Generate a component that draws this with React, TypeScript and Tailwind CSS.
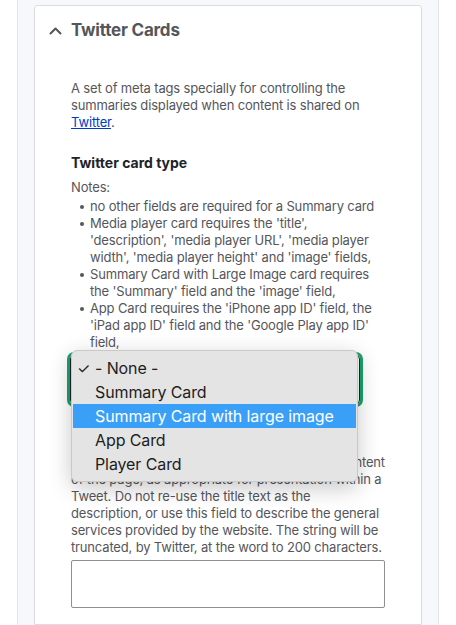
const notes = [
  "no other fields are required for a Summary card",
  "Media player card requires the 'title', 'description', 'media player URL', 'media player width', 'media player height' and 'image' fields,",
  "Summary Card with Large Image card requires the 'Summary' field and the 'image' field,",
  "App Card requires the 'iPhone app ID' field, the 'iPad app ID' field and the 'Google Play app ID' field,",
];

const options = ["- None -", "Summary Card", "Summary Card with large image", "App Card", "Player Card"];

// wrapped as the reference wraps it
const descriptionLines = [
  "A description that concisely summarizes the content",
  "of the page, as appropriate for presentation within a",
  "Tweet. Do not re-use the title text as the",
  "description, or use this field to describe the general",
  "services provided by the website. The string will be",
  "truncated, by Twitter, at the word to 200 characters.",
];

function SelectPopup() {
  return (
    <div className="absolute left-px top-[-5px] w-[287px] rounded-[6px] border border-[#c9c9c9] bg-[#e4e4e4] py-[5px] shadow-[0_6px_22px_rgba(0,0,0,0.22)]">
      {options.map((opt, i) => (
        <div
          key={opt}
          className={
            "relative mx-px flex h-[24px] items-center pl-[22px] text-[16px] tracking-[-0.1px] " +
            (i === 2 ? "bg-[#3a9ff7] text-white" : "text-[#1d1d1d]")
          }
        >
          {i === 0 && <span className="absolute left-[4px] text-[15px]">✓</span>}
          {opt}
        </div>
      ))}
    </div>
  );
}

export default function App() {
  return (
    <div className="h-[625px] overflow-hidden bg-white" style={{ fontFamily: "Inter, 'Liberation Sans', sans-serif" }}>
      <div className="ml-[17px] h-full w-[422px] border-x border-[#e4e5ea] bg-[#f7f8fb] px-[16px] pt-[5px]">
        <div className="h-full rounded-t-[3px] border border-[#dcdde2] bg-white">
          <div className="flex h-[50px] items-center pl-[14px] text-[#55565b]">
            <svg width="13" height="8" viewBox="0 0 13 8" fill="none" stroke="currentColor" strokeWidth="2" strokeLinecap="round" strokeLinejoin="round">
              <polyline points="1.5,6.5 6.5,1.5 11.5,6.5" />
            </svg>
            <span className="ml-[9px] text-[17px] font-bold tracking-[-0.2px]">Twitter Cards</span>
          </div>

          <div className="pl-[36px] pr-[35px] pt-[24px] text-[13px] leading-[17px] tracking-[-0.16px] text-[#55565b]">
            <p>
              A set of meta tags specially for controlling the summaries displayed when content is shared on{" "}
              <a href="#" className="text-[#0039c6] underline">Twitter</a>.
            </p>

            <div className="mt-[23px] text-[14px] font-bold leading-[18px] tracking-normal text-[#222329]">Twitter card type</div>
            <div className="mt-[7px]">Notes:</div>
            <ul className="mt-[2px] pl-[19px]">
              {notes.map((n) => (
                <li key={n} className="relative">
                  <span className="absolute left-[-10px] top-[7px] h-[4px] w-[4px] rounded-full bg-[#55565b]" />
                  {n}
                </li>
              ))}
            </ul>

            <div className="relative ml-[-4px] mt-px h-[55px] w-[296px] rounded-[7px] border-[3px] border-[#1ba26a]">
              <div className="h-full rounded-[4px] border border-[#222330] bg-white" />
              <SelectPopup />
            </div>

            <div className="mt-[20px] text-[14px] font-bold leading-[18px] tracking-normal text-[#222329]">Description</div>
            <p className="mt-[9px] whitespace-nowrap">
              {descriptionLines.map((l, i) => (
                <span key={i}>
                  {l}
                  {i < descriptionLines.length - 1 && <br />}
                </span>
              ))}
            </p>
            <textarea className="mt-[4px] block h-[48px] w-[314px] resize-none rounded-[2px] border border-[#8e8f95] bg-white" />
          </div>
        </div>
      </div>
    </div>
  );
}
